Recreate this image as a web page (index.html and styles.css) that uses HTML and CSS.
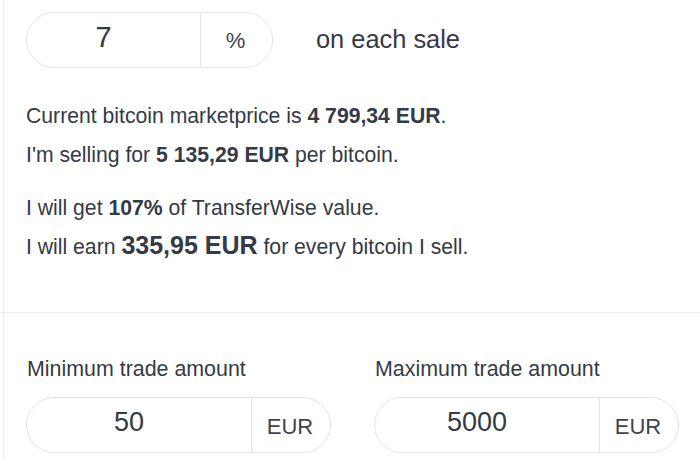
FILE: index.html
```html
<!DOCTYPE html>
<html>
<head>
<meta charset="utf-8">
<link rel="stylesheet" href="styles.css">
</head>
<body>
<div class="top">
  <div class="fee-row">
    <div class="pill pill-fee">
      <div class="value value-fee">7</div>
      <div class="unit unit-fee">%</div>
    </div>
    <div class="fee-label">on each sale</div>
  </div>
  <div class="info">
    <div class="line">Current bitcoin marketprice is <b>4 799,34 EUR</b>.</div>
    <div class="line">I'm selling for <b>5 135,29 EUR</b> per bitcoin.</div>
    <div class="line gap">I will get <b>107%</b> of TransferWise value.</div>
    <div class="line">I will earn <b class="big">335,95 EUR</b> for every bitcoin I sell.</div>
  </div>
</div>
<div class="divider"></div>
<div class="bottom">
  <div class="field">
    <div class="label">Minimum trade amount</div>
    <div class="pill pill-amount">
      <div class="value value-amount">50</div>
      <div class="unit unit-amount">EUR</div>
    </div>
  </div>
  <div class="field">
    <div class="label">Maximum trade amount</div>
    <div class="pill pill-amount">
      <div class="value value-amount">5000</div>
      <div class="unit unit-amount">EUR</div>
    </div>
  </div>
</div>
</body>
</html>
```
FILE: styles.css
```css
* { box-sizing: border-box; }
html, body { margin: 0; padding: 0; background: #ffffff; }
body {
  width: 700px;
  height: 460px;
  overflow: hidden;
  font-family: "Liberation Sans", Arial, sans-serif;
  color: #343a46;
}
.top {
  margin-left: 3px;
  border-left: 1px solid #efefef;
  height: 312px;
  padding: 12px 0 0 22px;
}
.fee-row {
  display: flex;
  align-items: center;
}
.pill {
  display: flex;
  border: 1px solid #e2e2e2;
  border-radius: 30px;
  background: #fff;
}
.pill-fee {
  width: 247px;
  height: 56px;
}
.value {
  display: flex;
  align-items: center;
  justify-content: center;
  border-right: 1px solid #e2e2e2;
  padding-right: 20px;
}
.value-fee {
  width: 174px;
  font-size: 29px;
  padding-bottom: 6px;
}
.unit {
  flex: 1;
  display: flex;
  align-items: center;
  justify-content: center;
  color: #3f444e;
}
.unit-fee {
  font-size: 22px;
  padding-top: 2px;
  padding-right: 2px;
}
.fee-label {
  margin-left: 43px;
  font-size: 25.4px;
  padding-bottom: 2px;
}
.info {
  margin-top: 28px;
  font-size: 21.2px;
}
.line {
  line-height: 39px;
  white-space: nowrap;
}
.line.gap { margin-top: 14px; }
.big { font-size: 25px; line-height: 30px; }
.divider {
  height: 1px;
  background: #ececec;
}
.bottom {
  margin-left: 3px;
  border-left: 1px solid #efefef;
  height: 147px;
  padding: 44px 0 0 22px;
  display: grid;
  grid-template-columns: 305px 305px;
  column-gap: 43px;
  align-items: start;
}
.label {
  font-size: 21.4px;
  line-height: 24px;
  margin-bottom: 16px;
  padding-left: 1px;
  white-space: nowrap;
}
.pill-amount {
  height: 56px;
}
.value-amount {
  width: 225px;
  font-size: 27px;
  padding-bottom: 5px;
}
.unit-amount {
  font-size: 22px;
  padding-top: 3px;
  padding-right: 2px;
}
```
